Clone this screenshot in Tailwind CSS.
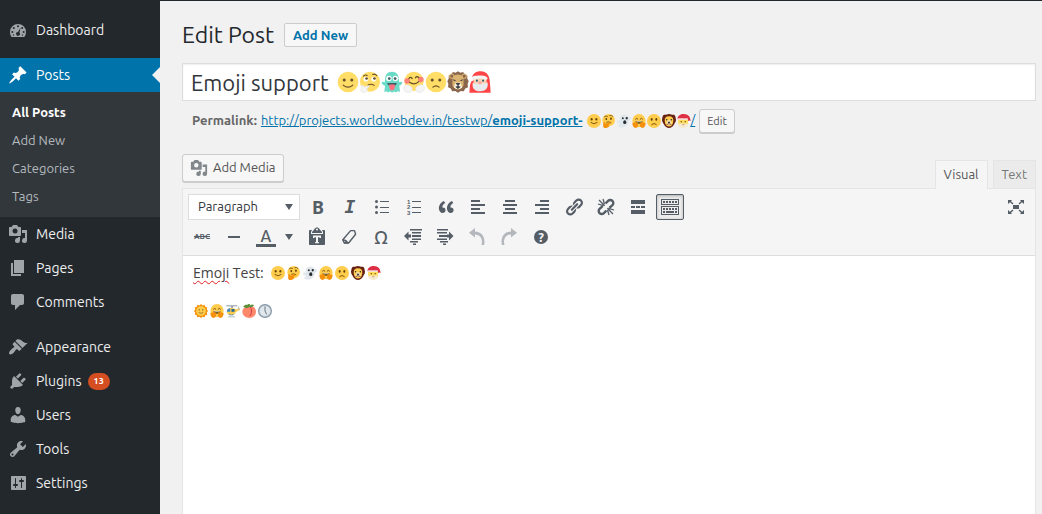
<!DOCTYPE html>
<html lang="en">
<head>
    <meta charset="UTF-8">
    <meta name="viewport" content="width=device-width, initial-scale=1.0">
    <title>Edit Post</title>
    <script src="https://cdn.jsdelivr.net/npm/@tailwindcss/browser@4"></script>
</head>
<body class="bg-[#f1f1f1] font-['Ubuntu','Noto_Sans',sans-serif] text-[13px] text-[#444]">

    <!-- Icon sprite -->
    <svg class="hidden" aria-hidden="true">
        <!-- Admin menu -->
        <symbol id="i-dashboard" viewBox="0 0 20 20"><path d="M3.76 17h12.48A7.9 7.9 0 0 0 18 12a8 8 0 1 0-16 0c0 1.930.66 3.650 1.760 5z"/><g fill="#23282d"><circle cx="10" cy="6.300" r="1"/><circle cx="5.800" cy="8" r="1"/><circle cx="14.200" cy="8" r="1"/><circle cx="4.300" cy="12" r="1"/><circle cx="15.700" cy="12" r="1"/><path d="M12.600 7.500l-1.100 5.200a1.900 1.900 0 1 1-1.500-.7z"/><circle cx="5.500" cy="15" r=".7"/><circle cx="14.500" cy="15" r=".7"/></g></symbol>
        <symbol id="i-post" viewBox="0 0 20 20"><path d="M10.44 3.020l1.820-1.820 6.360 6.350-1.830 1.820c-1.050-.68-2.480-.57-3.410.36l-.75.75c-.92.93-1.040 2.350-.35 3.410l-1.830 1.820-2.410-2.410-2.800 2.790c-.42.42-3.380 2.710-3.800 2.290s1.860-3.390 2.280-3.810l2.790-2.790L4.100 9.360l1.830-1.820c1.050.69 2.480.57 3.400-.36l.75-.75c.93-.92 1.050-2.350.36-3.410z"/></symbol>
        <symbol id="i-media" viewBox="0 0 20 20"><path fill-rule="evenodd" d="M13 11V4c0-.55-.45-1-1-1h-1.670L9 1H5L3.670 3H2c-.55 0-1 .45-1 1v7c0 .55.45 1 1 1h10c.55 0 1-.45 1-1zM7 4.500a2.500 2.500 0 1 1 0 5 2.500 2.500 0 0 1 0-5zM14 6h5v10.500a2.500 2.500 0 1 1-2-2.450V9h-3zM10 14.050V13h2v3.500a2.500 2.500 0 1 1-2-2.450z"/></symbol>
        <symbol id="i-page" viewBox="0 0 20 20"><path d="M6 15V2h10v13zM5 16h8v2H3V5h2z"/></symbol>
        <symbol id="i-comment" viewBox="0 0 20 20"><path d="M5 2h9c1.100 0 2 .9 2 2v7c0 1.100-.9 2-2 2h-2l-5 5v-5H5c-1.100 0-2-.9-2-2V4c0-1.100.9-2 2-2z"/></symbol>
        <symbol id="i-appearance" viewBox="0 0 20 20"><path d="M14.480 11.060L7.410 3.990l1.500-1.500c.5-.56 2.300-.47 3.510.32 1.210.8 1.430 1.280 2.910 2.100 1.180.64 2.450 1.260 4.450.85zm-.71.71L6.700 4.700 4.930 6.470c-.39.39-.39 1.020 0 1.410l1.060 1.060c.39.39.39 1.030 0 1.420-.6.6-1.430 1.110-2.210 1.690-.35.26-.7.53-1.010.84C1.430 14.230.4 16.080 1.400 17.070c.99 1 2.840-.03 4.180-1.360.31-.31.58-.66.85-1.020.57-.78 1.080-1.610 1.690-2.210.39-.39 1.020-.39 1.410 0l1.060 1.060c.39.39 1.020.39 1.410 0z"/></symbol>
        <symbol id="i-plugins" viewBox="0 0 20 20"><path d="M13.110 4.360L9.870 7.600 8 5.730l3.240-3.240c.35-.34 1.050-.2 1.560.32.52.51.66 1.210.31 1.550zm-8 1.770l.91-1.120 9.010 9.010-1.190.84c-.71.71-2.630 1.160-3.820 1.160H6.140L4.900 17.260c-.59.59-1.540.59-2.120 0-.59-.58-.59-1.530 0-2.120l1.240-1.240v-3.880c0-1.130.4-3.190 1.090-3.890zm7.260 3.970l3.240-3.240c.34-.35 1.040-.21 1.550.31.52.51.66 1.210.31 1.550l-3.240 3.250z"/></symbol>
        <symbol id="i-users" viewBox="0 0 20 20"><path d="M10 9.250c-2.270 0-2.730-3.440-2.730-3.440C7 4.020 7.820 2 9.970 2c2.160 0 2.980 2.020 2.710 3.810 0 0-.41 3.440-2.680 3.440zm0 2.570L12.720 10c2.390 0 4.520 2.330 4.520 4.530v2.490s-3.650 1.130-7.240 1.130c-3.650 0-7.240-1.130-7.240-1.130v-2.490c0-2.250 1.940-4.480 4.470-4.480z"/></symbol>
        <symbol id="i-tools" viewBox="0 0 20 20"><path fill-rule="evenodd" d="M16.680 9.770c-1.340 1.340-3.300 1.670-4.950.99l-5.410 6.520c-.99.99-2.590.99-3.580 0s-.99-2.590 0-3.570l6.520-5.420c-.68-1.650-.35-3.610.99-4.950 1.280-1.280 3.120-1.620 4.720-1.060l-2.890 2.890 2.820 2.820 2.860-2.870c.53 1.580.18 3.390-1.080 4.650zM3.810 16.210c.4.39 1.040.39 1.430 0 .4-.4.4-1.040 0-1.430-.39-.4-1.030-.4-1.430 0-.39.39-.39 1.030 0 1.430z"/></symbol>
        <symbol id="i-settings" viewBox="0 0 20 20"><path fill-rule="evenodd" d="M18 16V4c0-.55-.45-1-1-1H4c-.55 0-1 .45-1 1v12c0 .55.45 1 1 1h13c.55 0 1-.45 1-1zM8 11h1a1 1 0 0 1 0 2H8v1.500a.5.5 0 0 1-1 0V13H6a1 1 0 0 1 0-2h1V5.500a.5.5 0 0 1 1 0zm5-2h-1a1 1 0 0 1 0-2h1V5.500a.5.5 0 0 1 1 0V7h1a1 1 0 0 1 0 2h-1v5.500a.5.5 0 0 1-1 0z"/></symbol>

        <!-- Editor toolbar -->
        <symbol id="i-ul" viewBox="0 0 20 20"><circle cx="4.500" cy="4.500" r="1.500"/><circle cx="4.500" cy="10" r="1.500"/><circle cx="4.500" cy="15.500" r="1.500"/><path d="M8 4h9v1H8zM8 10h9v1H8zM8 15h9v1H8z"/></symbol>
        <symbol id="i-ol" viewBox="0 0 20 20"><path d="M8 4h9v1H8zM8 10h9v1H8zM8 15h9v1H8z"/><g font-family="Liberation Sans" font-size="6" font-weight="bold"><text x="3" y="6.500">1</text><text x="3" y="12">2</text><text x="3" y="17.500">3</text></g></symbol>
        <symbol id="i-quote" viewBox="0 0 20 20"><path d="M9.490 13.220c0-.74-.2-1.380-.61-1.900-.62-.78-1.830-.88-2.530-.72-.29-1.650 1.110-3.750 2.920-4.650L7.880 4c-2.730 1.300-5.420 4.280-4.960 8.050C3.210 14.430 4.590 16 6.540 16c.85 0 1.560-.25 2.120-.75s.83-1.180.83-2.030zm8.050 0c0-.74-.2-1.380-.61-1.900-.63-.78-1.830-.88-2.530-.72-.29-1.650 1.110-3.750 2.920-4.650L15.930 4c-2.730 1.300-5.410 4.280-4.950 8.050.29 2.380 1.660 3.950 3.610 3.950.85 0 1.560-.25 2.120-.75s.83-1.180.83-2.030z"/></symbol>
        <symbol id="i-left" viewBox="0 0 20 20"><path d="M3 3h9v2H3zM3 7h14v2H3zM3 11h9v2H3zM3 15h14v2H3z"/></symbol>
        <symbol id="i-center" viewBox="0 0 20 20"><path d="M5 3h10v2H5zM3 7h14v2H3zM5 11h10v2H5zM3 15h14v2H3z"/></symbol>
        <symbol id="i-right" viewBox="0 0 20 20"><path d="M8 3h9v2H8zM3 7h14v2H3zM8 11h9v2H8zM3 15h14v2H3z"/></symbol>
        <symbol id="i-link" viewBox="0 0 20 20"><path d="M17.740 2.760c1.680 1.690 1.680 4.410 0 6.100l-1.530 1.520c-1.120 1.120-2.700 1.470-4.140 1.090l2.620-2.610.76-.77.76-.76c.84-.84.84-2.200 0-3.040-.84-.85-2.200-.85-3.040 0l-.77.76-3.380 3.380c-.37-1.440-.02-3.020 1.100-4.140l1.520-1.530c1.690-1.680 4.420-1.680 6.100 0zM8.590 13.430l5.340-5.340c.42-.42.42-1.100 0-1.520-.44-.43-1.130-.39-1.530 0l-5.330 5.340c-.42.42-.42 1.100 0 1.520.44.43 1.130.39 1.520 0zm-.76 2.290l4.140-4.150c.38 1.440.03 3.020-1.090 4.140l-1.520 1.530c-1.690 1.680-4.410 1.680-6.100 0-1.680-1.680-1.680-4.420 0-6.100l1.530-1.520c1.120-1.120 2.700-1.470 4.140-1.100l-4.140 4.150c-.85.84-.85 2.200 0 3.050.84.84 2.200.84 3.040 0z"/></symbol>
        <symbol id="i-unlink" viewBox="0 0 20 20"><g fill="none" stroke="currentColor"><path stroke-width="2.400" d="M9.500 6.500l2.600-2.600a3 3 0 0 1 4.300 0 3 3 0 0 1 0 4.300l-3 2.700M10.500 13.500l-2.600 2.600a3 3 0 0 1-4.300 0 3 3 0 0 1 0-4.300l3-2.700"/><path stroke-width="1.300" d="M8.700 8.700L3 3M8.500 7L7 2M7.500 8.700L2 7M11.300 11.300L17 17M11.500 13l1.500 5M12.500 11.300L18 13"/></g></symbol>
        <symbol id="i-more" viewBox="0 0 20 20"><path d="M3 3h14v4H3zM3 9h4v2H3zM8 9h4v2H8zM13 9h4v2h-4zM3 13h14v4H3z"/></symbol>
        <symbol id="i-kitchen" viewBox="0 0 20 20"><path fill-rule="evenodd" d="M1 2h18v6H1zM2 3v4h16V3zM1 9h18v9H1zM2 10v7h16v-7z"/><path d="M3 4h2v2H3zM6 4h2v2H6zM9 4h2v2H9zM12 4h2v2h-2zM15 4h2v2h-2zM3 11h2v2H3zM6 11h2v2H6zM9 11h2v2H9zM12 11h2v2h-2zM15 11h2v2h-2zM3 14h2v2H3zM6 14h8v2H6zM15 14h2v2h-2z"/></symbol>
        <symbol id="i-fullscreen" viewBox="0 0 20 20"><path d="M7 8h6v4H7zM2 3h4L5 4.200 7.500 6.500 6.500 7.500 4 5.200 2 7zM18 3v4l-2-1.800L13.500 7.500l-1-1L15 4.200 14 3zM2 17v-4l2 1.800 2.500-2.300 1 1L5 15.800 6 17zM18 17h-4l1-1.200-2.500-2.300 1-1 2.500 2.300L18 13z"/></symbol>
        <symbol id="i-paste" viewBox="0 0 20 20"><path fill-rule="evenodd" d="M12.400 2L15 5v1H5V5l2.600-3C8 1 9 .5 10 .5s2 .5 2.400 1.500zM9 2.500a1 1 0 1 0 2 0 1 1 0 0 0-2 0zM3 3h2L4 5v2h12V5l-1-2h2c.6 0 1 .4 1 1v13c0 .6-.4 1-1 1H3c-.6 0-1-.4-1-1V4c0-.6.400-1 1-1zM6 8.500V11h1.200l.5-.8H9V15l-1 .3v.9h4v-.9l-1-.3v-4.800h1.300l.5.8H14V8.500z"/></symbol>
        <symbol id="i-eraser" viewBox="0 0 20 20"><path fill="none" stroke="currentColor" stroke-width="1.400" stroke-linejoin="round" d="M11.600 3.600h3.900l1.100 3.600-7 8.800H5.300l-1.500-3.200z"/><path d="M3.600 12.400c2-.4 3.600.4 4.700 1.800l1.600 1.500-.7.800H5.100l-.7-1.200 2.200-.2-1.300-1.300-1.600.1z"/></symbol>
        <symbol id="i-outdent" viewBox="0 0 20 20"><path d="M7 3h12v1.500H7zM9 6h9v1.500H9zM9 9h9v2H9zM9 12.500h9V14H9zM7 15h8v1.500H7zM10 17.500h3V19h-3zM5.500 5.500v3H8v3H5.500v3L1 10z" transform="translate(0 -1)"/></symbol>
        <symbol id="i-indent" viewBox="0 0 20 20"><path d="M2 3h11v1.500H2zM2 6h10v1.500H2zM4 9h8v2H4zM2 12.500h10V14H2zM5 15h8v1.500H5zM8 17.500h3V19H8zM14 5.500v3h-2v3h2v3l4.500-4.500z" transform="translate(0 -1)"/></symbol>
        <symbol id="i-undo" viewBox="0 0 20 20"><path d="M8 1v3.500c6 .3 9.500 4.500 9.500 10.500 0 1-.2 2-.5 3h-2.600c.4-1 .6-2 .6-3 0-4.500-2.500-7.300-7-7.600V10.500L2 5.800z"/></symbol>
        <symbol id="i-redo" viewBox="0 0 20 20"><path d="M12 1v3.500C6 4.800 2.500 9 2.500 15c0 1 .2 2 .5 3h2.600c-.4-1-.6-2-.6-3 0-4.500 2.500-7.300 7-7.600v3.100l6-4.700z"/></symbol>
        <symbol id="i-caret" viewBox="0 0 8 6"><path d="M0 0h8L4 6z"/></symbol>

        <!-- Flat emoji used in the title -->
        <symbol id="e-smile" viewBox="0 0 64 64"><circle cx="32" cy="32" r="30" fill="#ffdd67"/><g fill="#664e27"><circle cx="21" cy="26" r="4.500"/><circle cx="43" cy="26" r="4.500"/></g><path d="M18 41q14 12 28 0" fill="none" stroke="#664e27" stroke-width="3.500" stroke-linecap="round"/></symbol>
        <symbol id="e-think" viewBox="0 0 64 64"><circle cx="32" cy="31" r="29" fill="#ffdd67"/><g fill="#fff"><circle cx="20" cy="24" r="7"/><circle cx="43" cy="24" r="7"/></g><g fill="#664e27"><circle cx="22" cy="22" r="3.800"/><circle cx="45" cy="22" r="3.800"/></g><path d="M13 15q6-5 11-2M40 10q7-3 12 4M26 41q9-5 18 1" fill="none" stroke="#664e27" stroke-width="3" stroke-linecap="round"/><path d="M7 42c3-3 6 0 7 4l13-3c4 0 4 4 1 5l-6 2c4 1 4 4 2 6-2 5-6 7-11 7S4 60 5 53z" fill="#f4f4f4" stroke="#dcdcdc"/></symbol>
        <symbol id="e-ghost" viewBox="0 0 64 64"><path d="M32 2c13 0 20 10 20 22l1 9c4-1 9-4 9 0 0 6-5 9-9 10l2 14c2 4-4 4-6 1-4 5-8 5-11 1-3 5-8 5-11 0-5 4-9 3-11-1-3 4-8 3-6-1l2-14c-5-1-10-5-10-10 0-4 5-1 9 0l1-9C12 12 19 2 32 2z" fill="#6adbc6"/><g fill="#fff"><circle cx="23" cy="22" r="8"/><circle cx="42" cy="22" r="8"/></g><g fill="#3b5f62"><circle cx="24" cy="22" r="4"/><circle cx="41" cy="22" r="4"/><path d="M18 35h28q-2 10-14 10T18 35z"/></g><path d="M24 39h16v8q-1 9-8 9t-8-9z" fill="#ff717f"/></symbol>
        <symbol id="e-hug" viewBox="0 0 64 64"><circle cx="32" cy="30" r="28" fill="#ffdd67"/><g fill="#ff717f" opacity=".85"><circle cx="12" cy="29" r="8"/><circle cx="52" cy="25" r="8"/></g><path d="M17 22q5-7 10 0M36 20q5-7 10 0M19 33q14 10 27-2" fill="none" stroke="#664e27" stroke-width="3.500" stroke-linecap="round"/><path d="M2 50c0-8 9-12 14-9s12 5 11 13-9 9-14 8S2 58 2 50zM62 50c0-8-9-12-14-9s-12 5-11 13 9 9 14 8 11-4 11-12z" fill="#f5f5f5" stroke="#dedede" stroke-width="1.500"/></symbol>
        <symbol id="e-frown" viewBox="0 0 64 64"><circle cx="32" cy="32" r="30" fill="#ffdd67"/><g fill="#664e27"><circle cx="21" cy="26" r="4.500"/><circle cx="43" cy="26" r="4.500"/></g><path d="M23 47q9-8 18 0" fill="none" stroke="#664e27" stroke-width="3.500" stroke-linecap="round"/></symbol>
        <symbol id="e-lion" viewBox="0 0 64 64"><path d="M32 1l7 4 8-2 4 7 8 3v9l4 8-3 8 1 9-8 4-4 8-9-1-8 5-8-5-9 1-4-8-8-4 1-9-3-8 4-8v-9l8-3 4-7 8 2z" fill="#89664c"/><g fill="#89664c" stroke="#dbb471" stroke-width="3"><circle cx="14" cy="15" r="6"/><circle cx="50" cy="15" r="6"/></g><path d="M32 10c12 0 17 8 16 19 0 8 2 12-4 19q-12 12-24 0c-6-7-4-11-4-19-1-11 4-19 16-19z" fill="#dbb471"/><path d="M24 34h16l4 14q-12 10-24 0z" fill="#fff3df"/><g fill="#3e4347"><path d="M25 35h14l-5 7h-4zM18 23l9 5-7 1zM46 23l-9 5 7 1zM24 46q8-5 16 0l-8 6z"/><path d="M31 40h2v7h-2z"/></g></symbol>
        <symbol id="e-santa" viewBox="0 0 64 64"><path d="M8 26C8 8 20 1 34 1c20 0 26 15 27 34l2 28H1l2-22z" fill="#ff4546"/><path d="M13 19h38v22H13z" fill="#ffd3b6"/><path d="M8 20c0-5 8-7 24-7s22 5 22 9-6 4-10 2c-9-3-17-3-24 0-6 2-12 1-12-4z" fill="#f5f5f5"/><path d="M11 34c7 5 11 2 21 3s14 0 22-4c3 18-6 26-22 26S8 50 11 34z" fill="#e8ebed"/><g fill="#2d5d70"><circle cx="23" cy="28" r="3"/><circle cx="41" cy="28" r="3"/></g><circle cx="32" cy="34" r="5" fill="#f9aaa0"/><circle cx="7" cy="24" r="6" fill="#fff"/></symbol>

        <!-- Small emoji used in the slug and the body -->
        <symbol id="t-smile" viewBox="0 0 36 36"><circle cx="18" cy="18" r="18" fill="#ffcc4d"/><g fill="#664500"><ellipse cx="12" cy="13.500" rx="2.500" ry="3.500"/><ellipse cx="24" cy="13.500" rx="2.500" ry="3.500"/></g><path d="M10 22q8 7 16 0" fill="none" stroke="#664500" stroke-width="2.200" stroke-linecap="round"/></symbol>
        <symbol id="t-think" viewBox="0 0 36 36"><circle cx="17" cy="16" r="16" fill="#ffcc4d"/><g fill="#664500"><ellipse cx="11" cy="13" rx="2.300" ry="3"/><ellipse cx="23" cy="12" rx="2.300" ry="3"/></g><path d="M6 7q4-4 8-1M20 4q5-2 8 2M12 21q6-3 11 1" fill="none" stroke="#664500" stroke-width="2" stroke-linecap="round"/><path d="M4 21c2-2 5 1 5 4l10-3c4-1 4 3 1 4l-4 2c3 0 3 3 1 5-3 3-6 3-9 3s-6-3-5-8z" fill="#f4900c"/></symbol>
        <symbol id="t-ghost" viewBox="0 0 36 36"><path d="M36 11c0 4-3 6-6 7 0 8-6 17-18 17-4 0-8-2-11-5 4 0 6-2 7-6-5 2-8-1-8-4 0-4 4-4 7-3C6 8 10 1 19 1c6 0 10 3 11 8 3-2 6-1 6 2z" fill="#e1e8ed"/><g fill="#292f33"><circle cx="15" cy="11" r="2.400"/><circle cx="25" cy="11" r="3"/><ellipse cx="20" cy="21" rx="4" ry="5"/></g></symbol>
        <symbol id="t-hug" viewBox="0 0 36 36"><circle cx="18" cy="17" r="17" fill="#ffcc4d"/><path d="M9 13q3-4 6 0M21 13q3-4 6 0" fill="none" stroke="#664500" stroke-width="2.200" stroke-linecap="round"/><path d="M9 18h18q-1 7-9 7t-9-7z" fill="#664500"/><path d="M11 19h14v2H11z" fill="#fff"/><path d="M1 24c1-3 3-2 4 0l2-3c1-2 3-1 3 1l3-1c2 0 2 2 1 3 3 2 2 9-2 11-6 3-11-3-11-11zM35 24c-1-3-3-2-4 0l-2-3c-1-2-3-1-3 1l-3-1c-2 0-2 2-1 3-3 2-2 9 2 11 6 3 11-3 11-11z" fill="#f4900c"/></symbol>
        <symbol id="t-frown" viewBox="0 0 36 36"><circle cx="18" cy="18" r="18" fill="#ffcc4d"/><g fill="#664500"><ellipse cx="12" cy="14" rx="2.500" ry="3.500"/><ellipse cx="24" cy="14" rx="2.500" ry="3.500"/></g><path d="M12 27q6-6 12 0" fill="none" stroke="#664500" stroke-width="2.200" stroke-linecap="round"/></symbol>
        <symbol id="t-lion" viewBox="0 0 36 36"><path d="M18 0c5 0 8 3 13 2 5 3 3 7 5 12 0 7-3 8-5 13-3 6-8 9-13 9S8 33 5 27C3 22 0 21 0 14 2 9 0 5 5 2c5 1 8-2 13-2z" fill="#662113"/><path d="M18 6c8 0 12 4 11 12-1 7-3 14-11 14S8 25 7 18C6 10 10 6 18 6z" fill="#ffcc4d"/><path d="M14 16h8l3 9q-7 7-14 0z" fill="#ffe8b6"/><g fill="#292f33"><circle cx="12" cy="15" r="2"/><circle cx="24" cy="15" r="2"/><path d="M14 20h8l-3 4h-2z"/></g><path d="M12 27q6-4 12 0" fill="none" stroke="#662113" stroke-width="2"/></symbol>
        <symbol id="t-santa" viewBox="0 0 36 36"><path d="M3 14h26v10q-3 11-13 11T3 24z" fill="#ffdc5d"/><path d="M2 25q5 1 8-1 6 2 12 0 3 2 7 1-1 10-13 11Q4 35 2 25z" fill="#f5e9cf"/><path d="M1 13C2 4 9 0 17 0c12 0 18 7 18 20h-5l-3-7z" fill="#dd2e44"/><path d="M2 11h25q3 2 0 4H2q-3-2 0-4z" fill="#f3d9d9"/><circle cx="32" cy="21" r="4" fill="#fff"/><g fill="#664500"><circle cx="11" cy="20" r="1.700"/><circle cx="21" cy="20" r="1.700"/></g><path d="M12 27h8q-4 4-8 0z" fill="#c1694f"/></symbol>
        <symbol id="t-sun" viewBox="0 0 36 36"><path d="M18 0l4 4 5-2 2 5 5 2-1 5 3 4-3 4 1 6-5 1-2 5-5-1-4 3-4-3-6 1-1-5-5-2 1-5-3-4 3-4-1-5 5-2 2-5 5 2z" fill="#f4900c"/><circle cx="18" cy="18" r="12.500" fill="#ffcc4d"/><g fill="#664500"><circle cx="13.500" cy="15" r="1.700"/><circle cx="22.500" cy="15" r="1.700"/></g><path d="M12 22q6 4 12 0" fill="none" stroke="#664500" stroke-width="1.500"/></symbol>
        <symbol id="t-heli" viewBox="0 0 36 36"><path d="M1 4h28v2H1zM14 4h3v7h-3z" fill="#66757f"/><path d="M14 10c8 0 11 3 12 4l8-4 2 4-11 7c-2 5-5 7-11 7C6 28 2 25 2 20c0-6 5-10 12-10z" fill="#ffcc4d"/><path d="M2 20c0-6 4-9 9-9v9z" fill="#4289c1"/><path d="M14 13h8v7h-8z" fill="#226699"/><path d="M32 6l2 10M5 33h18" stroke="#99aab5" stroke-width="2" fill="none"/><path d="M6 25q8 5 15 0l-3 4H9z" fill="#226699"/></symbol>
        <symbol id="t-peach" viewBox="0 0 36 36"><path d="M20 6c9-2 16 4 16 14 0 9-8 16-17 16S1 30 1 20C1 10 10 5 20 6z" fill="#ff886c"/><path d="M20 7c6 6 6 17 0 24" fill="none" stroke="#be1931" stroke-width="1.800"/><path d="M19 8C14 11 7 12 3 6 7 2 10 1 14 2c2-2 4-2 6-2l1 4c3-4 7-3 10-1-2 4-7 6-12 5z" fill="#5c913b"/></symbol>
        <symbol id="t-clock" viewBox="0 0 36 36"><circle cx="18" cy="18" r="16.500" fill="#ccd6dd" stroke="#8899a6" stroke-width="3"/><circle cx="18" cy="18" r="12.500" fill="#e1e8ed"/><path d="M18 7v11l4 8" fill="none" stroke="#66757f" stroke-width="2.500" stroke-linecap="round" stroke-linejoin="round"/></symbol>
    </svg>

    <div class="flex min-h-screen border-t border-[#23282d]">

        <!-- Admin menu -->
        <nav class="w-40 shrink-0 bg-[#23282d] pt-3 text-sm text-[#eee]" aria-label="Main menu">
            <a href="#" class="flex h-[34px] items-center gap-2 pl-2"><svg class="size-5 fill-[#a0a5aa]"><use href="#i-dashboard"/></svg>Dashboard</a>

            <a href="#" class="relative mt-[11px] flex h-[34px] items-center gap-2 bg-[#0073aa] pl-2 text-white">
                <svg class="size-5 fill-white"><use href="#i-post"/></svg>Posts
                <span class="absolute right-0 border-y-8 border-r-8 border-y-transparent border-r-[#f1f1f1]"></span>
            </a>
            <ul class="bg-[#32373c] pt-[6px] pb-[7px] text-[13px] leading-[28px] text-[#b4b9be]">
                <li><a href="#" class="block pl-3 font-bold text-white">All Posts</a></li>
                <li><a href="#" class="block pl-3">Add New</a></li>
                <li><a href="#" class="block pl-3">Categories</a></li>
                <li><a href="#" class="block pl-3">Tags</a></li>
            </ul>
            <a href="#" class="flex h-[34px] items-center gap-2 pl-2"><svg class="size-5 fill-[#a0a5aa]"><use href="#i-media"/></svg>Media</a>
            <a href="#" class="flex h-[34px] items-center gap-2 pl-2"><svg class="size-5 fill-[#a0a5aa]"><use href="#i-page"/></svg>Pages</a>
            <a href="#" class="flex h-[34px] items-center gap-2 pl-2"><svg class="size-5 fill-[#a0a5aa]"><use href="#i-comment"/></svg>Comments</a>

            <a href="#" class="mt-[11px] flex h-[34px] items-center gap-2 pl-2"><svg class="size-5 fill-[#a0a5aa]"><use href="#i-appearance"/></svg>Appearance</a>
            <a href="#" class="flex h-[34px] items-center gap-[6px] pl-2"><svg class="mr-[2px] size-5 fill-[#a0a5aa]"><use href="#i-plugins"/></svg>Plugins
                <span class="rounded-full bg-[#d54e21] px-[6px] text-[9px] leading-[17px] font-bold text-white">13</span>
            </a>
            <a href="#" class="flex h-[34px] items-center gap-2 pl-2"><svg class="size-5 fill-[#a0a5aa]"><use href="#i-users"/></svg>Users</a>
            <a href="#" class="flex h-[34px] items-center gap-2 pl-2"><svg class="size-5 fill-[#a0a5aa]"><use href="#i-tools"/></svg>Tools</a>
            <a href="#" class="flex h-[34px] items-center gap-2 pl-2"><svg class="size-5 fill-[#a0a5aa]"><use href="#i-settings"/></svg>Settings</a>
        </nav>

        <main class="flex min-w-0 flex-1 flex-col pt-[22px] pr-[6px] pl-[22px]">
            <div class="flex h-6 items-center gap-[10px]">
                <h1 class="text-[23px] text-[#23282d]">Edit Post</h1>
                <a href="#" class="rounded-xs border border-[#ccc] bg-[#f7f7f7] px-2 text-[13px] leading-[22px] font-bold text-[#0073aa]">Add New</a>
            </div>

            <!-- Title -->
            <div class="mt-4 flex h-[38px] items-center border border-[#ddd] bg-white px-2 shadow-[inset_0_1px_2px_rgba(0,0,0,0.07)]">
                <input type="text" aria-label="Post title" value="Emoji support" class="field-sizing-content text-[22px] text-[#32373c] outline-none">
                <span class="ml-2 flex" role="img" aria-label="Emoji in title">
                    <svg class="size-[22px]"><use href="#e-smile"/></svg>
                    <svg class="size-[22px]"><use href="#e-think"/></svg>
                    <svg class="size-[22px]"><use href="#e-ghost"/></svg>
                    <svg class="size-[22px]"><use href="#e-hug"/></svg>
                    <svg class="size-[22px]"><use href="#e-frown"/></svg>
                    <svg class="size-[22px]"><use href="#e-lion"/></svg>
                    <svg class="size-[22px]"><use href="#e-santa"/></svg>
                </span>
            </div>

            <!-- Permalink -->
            <div class="mt-2 flex h-6 items-center pl-[10px] text-[13px] whitespace-nowrap text-[#666]">
                <strong class="mr-1">Permalink:</strong>
                <a href="#" class="flex items-center text-[#0073aa]">
                    <span class="underline">http://projects.worldwebdev.in/testwp/<b>emoji-support-</b></span>
                    <span class="flex gap-px pl-1">
                        <svg class="size-[14px]"><use href="#t-smile"/></svg>
                        <svg class="size-[14px]"><use href="#t-think"/></svg>
                        <svg class="size-[14px]"><use href="#t-ghost"/></svg>
                        <svg class="size-[14px]"><use href="#t-hug"/></svg>
                        <svg class="size-[14px]"><use href="#t-frown"/></svg>
                        <svg class="size-[14px]"><use href="#t-lion"/></svg>
                        <svg class="size-[14px]"><use href="#t-santa"/></svg>
                    </span>
                    <span class="underline">/</span>
                </a>
                <button type="button" class="ml-1 h-6 rounded-[3px] border border-[#ccc] bg-[#f7f7f7] px-[7px] text-[11px] text-[#555] shadow-[0_1px_0_#ccc]">Edit</button>
            </div>

            <!-- Media button and editor tabs -->
            <div class="mt-[21px] flex h-[34px] items-start justify-between">
                <button type="button" class="flex h-7 items-center gap-[5px] rounded-[3px] border border-[#ccc] bg-[#f7f7f7] px-[7px] text-[13px] text-[#555] shadow-[0_1px_0_#ccc]">
                    <svg class="size-[18px] fill-[#82878c]"><use href="#i-media"/></svg>Add Media
                </button>
                <div class="flex gap-[5px] self-end" role="tablist">
                    <button type="button" role="tab" aria-selected="true" class="relative z-10 -mb-px h-[29px] border border-b-0 border-[#e5e5e5] bg-[#f5f5f5] px-2 text-[13px] text-[#555]">Visual</button>
                    <button type="button" role="tab" aria-selected="false" class="h-7 border border-b-0 border-[#e5e5e5] bg-[#ebebeb] px-2 text-[13px] text-[#777]">Text</button>
                </div>
            </div>

            <!-- Editor -->
            <div class="flex flex-1 flex-col border-x border-t border-[#e5e5e5]">
                <div class="border-b border-[#ddd] bg-[#f5f5f5] px-[5px] pt-[5px] pb-1 text-[#555d66]" role="toolbar" aria-label="Formatting">
                    <div class="flex h-[26px] items-center gap-1">
                        <div class="relative flex w-28 items-center">
                            <select aria-label="Block format" class="h-[26px] w-full appearance-none border border-[#ddd] bg-white pl-[9px] text-[13px] text-[#32373c]">
                                <option>Paragraph</option>
                                <option>Heading 1</option>
                                <option>Heading 2</option>
                            </select>
                            <svg class="pointer-events-none absolute right-[7px] h-[6px] w-2 fill-[#555d66]"><use href="#i-caret"/></svg>
                        </div>
                        <button type="button" aria-label="Bold" class="w-7 font-['Noto_Sans',sans-serif] text-lg leading-[26px] font-bold">B</button>
                        <button type="button" aria-label="Italic" class="w-7 font-['DejaVu_Sans_Mono',monospace] text-lg leading-[26px] font-bold italic">I</button>
                        <button type="button" aria-label="Bulleted list" class="flex w-7 justify-center"><svg class="size-5 fill-current"><use href="#i-ul"/></svg></button>
                        <button type="button" aria-label="Numbered list" class="flex w-7 justify-center"><svg class="size-5 fill-current"><use href="#i-ol"/></svg></button>
                        <button type="button" aria-label="Blockquote" class="flex w-7 justify-center"><svg class="size-5 fill-current"><use href="#i-quote"/></svg></button>
                        <button type="button" aria-label="Align left" class="flex w-7 justify-center"><svg class="size-5 fill-current"><use href="#i-left"/></svg></button>
                        <button type="button" aria-label="Align center" class="flex w-7 justify-center"><svg class="size-5 fill-current"><use href="#i-center"/></svg></button>
                        <button type="button" aria-label="Align right" class="flex w-7 justify-center"><svg class="size-5 fill-current"><use href="#i-right"/></svg></button>
                        <button type="button" aria-label="Insert link" class="flex w-7 justify-center"><svg class="size-5 fill-current"><use href="#i-link"/></svg></button>
                        <button type="button" aria-label="Remove link" class="flex w-7 justify-center"><svg class="size-5 fill-current"><use href="#i-unlink"/></svg></button>
                        <button type="button" aria-label="Read more" class="flex w-7 justify-center"><svg class="size-5 fill-current"><use href="#i-more"/></svg></button>
                        <button type="button" aria-label="Toolbar toggle" aria-pressed="true" class="flex h-[26px] w-7 items-center justify-center rounded-xs border border-[#555d66] bg-[#ebebeb] shadow-[inset_0_1px_3px_rgba(0,0,0,0.25)]"><svg class="size-5 shrink-0 fill-current"><use href="#i-kitchen"/></svg></button>
                        <button type="button" aria-label="Fullscreen" class="ml-auto flex w-7 justify-center"><svg class="size-5 fill-current"><use href="#i-fullscreen"/></svg></button>
                    </div>
                    <div class="mt-[3px] flex h-7 items-center gap-1">
                        <button type="button" aria-label="Strikethrough" class="w-7 text-[8px] font-bold line-through">ABC</button>
                        <button type="button" aria-label="Horizontal line" class="flex w-7 justify-center"><span class="h-[2px] w-3 bg-current"></span></button>
                        <div class="flex h-7 w-[47px] items-center">
                            <button type="button" aria-label="Text color" class="mx-1 w-5 border-b-3 border-[#555d66] text-base leading-[16px] font-medium">A</button>
                            <button type="button" aria-label="Choose text color" class="ml-[5px]"><svg class="h-[6px] w-2 fill-current"><use href="#i-caret"/></svg></button>
                        </div>
                        <button type="button" aria-label="Paste as text" class="flex w-7 justify-center"><svg class="size-5 fill-current"><use href="#i-paste"/></svg></button>
                        <button type="button" aria-label="Clear formatting" class="flex w-7 justify-center"><svg class="size-5 fill-current"><use href="#i-eraser"/></svg></button>
                        <button type="button" aria-label="Special character" class="w-7 text-lg leading-[26px] font-medium">Ω</button>
                        <button type="button" aria-label="Decrease indent" class="flex w-7 justify-center"><svg class="size-5 fill-current"><use href="#i-outdent"/></svg></button>
                        <button type="button" aria-label="Increase indent" class="flex w-7 justify-center"><svg class="size-5 fill-current"><use href="#i-indent"/></svg></button>
                        <button type="button" aria-label="Undo" disabled class="flex w-7 justify-center opacity-40"><svg class="size-5 fill-current"><use href="#i-undo"/></svg></button>
                        <button type="button" aria-label="Redo" disabled class="flex w-7 justify-center opacity-40"><svg class="size-5 fill-current"><use href="#i-redo"/></svg></button>
                        <button type="button" aria-label="Keyboard shortcuts" class="flex w-7 justify-center"><span class="size-[14px] rounded-full bg-[#555d66] text-[13px] leading-[14px] font-bold text-[#f5f5f5]">?</span></button>
                    </div>
                </div>

                <div class="flex-1 bg-white px-[10px] pt-[7px] font-['Open_Sans',sans-serif] text-sm leading-5 text-[#444] outline-none" contenteditable="true" role="textbox" aria-label="Post content" aria-multiline="true" spellcheck="false">
                    <p class="flex items-center">
                        <span><span class="underline decoration-[#e02020] decoration-wavy decoration-1 underline-offset-2">Emoji</span> Test:</span>
                        <span class="ml-[7px] flex gap-[2px]">
                            <svg class="size-[14px]"><use href="#t-smile"/></svg>
                            <svg class="size-[14px]"><use href="#t-think"/></svg>
                            <svg class="size-[14px]"><use href="#t-ghost"/></svg>
                            <svg class="size-[14px]"><use href="#t-hug"/></svg>
                            <svg class="size-[14px]"><use href="#t-frown"/></svg>
                            <svg class="size-[14px]"><use href="#t-lion"/></svg>
                            <svg class="size-[14px]"><use href="#t-santa"/></svg>
                        </span>
                    </p>
                    <p class="mt-[21px] flex gap-[2px] pl-px">
                        <svg class="size-[14px]"><use href="#t-sun"/></svg>
                        <svg class="size-[14px]"><use href="#t-hug"/></svg>
                        <svg class="size-[14px]"><use href="#t-heli"/></svg>
                        <svg class="size-[14px]"><use href="#t-peach"/></svg>
                        <svg class="size-[14px]"><use href="#t-clock"/></svg>
                    </p>
                </div>
            </div>
        </main>
    </div>
</body>
</html>
